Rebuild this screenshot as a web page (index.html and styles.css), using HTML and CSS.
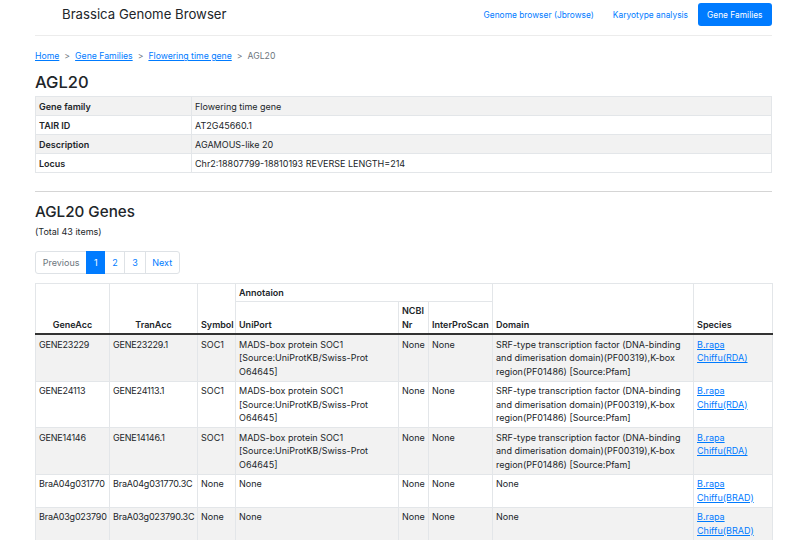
FILE: index.html
```html
<!DOCTYPE html>
<html lang="en">
<head>
<meta charset="utf-8">
<title>Brassica Genome Browser</title>
<link rel="stylesheet" href="styles.css">
</head>
<body>
<div class="wrap">
  <nav class="navbar">
    <a class="brand" href="#">Brassica Genome Browser</a>
    <ul class="nav">
      <li><a class="nav-link" href="#">Genome browser (Jbrowse)</a></li>
      <li><a class="nav-link" href="#">Karyotype analysis</a></li>
      <li><a class="nav-link active" href="#">Gene Families</a></li>
    </ul>
  </nav>

  <ol class="breadcrumb">
    <li><a href="#">Home</a></li>
    <li class="sep">&gt;</li>
    <li><a href="#">Gene Families</a></li>
    <li class="sep">&gt;</li>
    <li><a href="#">Flowering time gene</a></li>
    <li class="sep">&gt;</li>
    <li class="current">AGL20</li>
  </ol>

  <h3 class="title">AGL20</h3>
  <table class="info">
    <tbody>
      <tr><th>Gene family</th><td>Flowering time gene</td></tr>
      <tr><th>TAIR ID</th><td>AT2G45660.1</td></tr>
      <tr><th>Description</th><td>AGAMOUS-like 20</td></tr>
      <tr><th>Locus</th><td>Chr2:18807799-18810193 REVERSE LENGTH=214</td></tr>
    </tbody>
  </table>

  <hr class="divider">

  <h3 class="title genes-title">AGL20 Genes</h3>
  <p class="total">(Total 43 items)</p>

  <ul class="pagination">
    <li class="pg-item disabled">Previous</li>
    <li class="pg-item active">1</li>
    <li class="pg-item">2</li>
    <li class="pg-item">3</li>
    <li class="pg-item">Next</li>
  </ul>

  <table class="genes">
    <colgroup>
      <col class="c-gene"><col class="c-tran"><col class="c-sym"><col class="c-uni">
      <col class="c-ncbi"><col class="c-ipr"><col class="c-dom"><col class="c-sp">
    </colgroup>
    <thead>
      <tr>
        <th rowspan="2" class="center">GeneAcc</th>
        <th rowspan="2" class="center">TranAcc</th>
        <th rowspan="2">Symbol</th>
        <th colspan="3" class="group">Annotaion</th>
        <th rowspan="2">Domain</th>
        <th rowspan="2">Species</th>
      </tr>
      <tr>
        <th>UniPort</th>
        <th>NCBI Nr</th>
        <th>InterProScan</th>
      </tr>
    </thead>
    <tbody>
      <tr>
        <td class="id">GENE23229</td><td class="id">GENE23229.1</td><td>SOC1</td>
        <td>MADS-box protein SOC1 [Source:UniProtKB/Swiss-Prot O64645]</td>
        <td>None</td><td>None</td>
        <td>SRF-type transcription factor (DNA-binding and dimerisation domain)(PF00319),K-box region(PF01486) [Source:Pfam]</td>
        <td><a href="#">B.rapa Chiffu(RDA)</a></td>
      </tr>
      <tr>
        <td class="id">GENE24113</td><td class="id">GENE24113.1</td><td>SOC1</td>
        <td>MADS-box protein SOC1 [Source:UniProtKB/Swiss-Prot O64645]</td>
        <td>None</td><td>None</td>
        <td>SRF-type transcription factor (DNA-binding and dimerisation domain)(PF00319),K-box region(PF01486) [Source:Pfam]</td>
        <td><a href="#">B.rapa Chiffu(RDA)</a></td>
      </tr>
      <tr>
        <td class="id">GENE14146</td><td class="id">GENE14146.1</td><td>SOC1</td>
        <td>MADS-box protein SOC1 [Source:UniProtKB/Swiss-Prot O64645]</td>
        <td>None</td><td>None</td>
        <td>SRF-type transcription factor (DNA-binding and dimerisation domain)(PF00319),K-box region(PF01486) [Source:Pfam]</td>
        <td><a href="#">B.rapa Chiffu(RDA)</a></td>
      </tr>
      <tr>
        <td class="id">BraA04g031770</td><td class="id">BraA04g031770.3C</td><td>None</td>
        <td>None</td><td>None</td><td>None</td><td>None</td>
        <td><a href="#">B.rapa Chiffu(BRAD)</a></td>
      </tr>
      <tr>
        <td class="id">BraA03g023790</td><td class="id">BraA03g023790.3C</td><td>None</td>
        <td>None</td><td>None</td><td>None</td><td>None</td>
        <td><a href="#">B.rapa Chiffu(BRAD)</a></td>
      </tr>
    </tbody>
  </table>
</div>
</body>
</html>
```

FILE: styles.css
```css
* { box-sizing: border-box; }

html, body {
  margin: 0;
  padding: 0;
  background: #fff;
}

body {
  font-family: Inter, "Liberation Sans", Arial, sans-serif;
  font-size: 9px;
  line-height: 1.5;
  color: #212529;
}

a { color: #007bff; text-decoration: underline; }

.wrap {
  width: 737px;
  margin-left: 35px;
}

/* navbar */
.navbar {
  display: flex;
  align-items: center;
  justify-content: space-between;
  height: 36px;
  padding-left: 27px;
  padding-bottom: 6px;
  border-bottom: 1px solid #ececec;
}

.brand {
  font-size: 13.2px;
  line-height: 1.2;
  color: #212529;
  text-decoration: none;
}

.nav {
  display: flex;
  list-style: none;
  margin: 0;
  padding: 0;
}

.nav-link {
  display: block;
  padding: 4.5px 9.5px;
  font-size: 8.4px;
  line-height: 14px;
  text-decoration: none;
  color: #007bff;
}

.nav-link.active {
  background: #007bff;
  color: #fff;
  border-radius: 3px;
  padding: 4.5px 9.5px;
}

/* breadcrumb */
.breadcrumb {
  display: flex;
  list-style: none;
  margin: 14px 0 0;
  padding: 0;
  line-height: 13.5px;
  font-size: 8.7px;
}

.breadcrumb .sep {
  color: #6c757d;
  padding: 0 5px;
}

.breadcrumb .current { color: #6c757d; }

/* headings */
.title {
  margin: 9px 0 4px;
  font-size: 16.5px;
  font-weight: 500;
  line-height: 1.2;
}

.genes-title {
  margin: 11px 0 3px;
  font-size: 15.2px;
}

.total {
  margin: 0 0 13px;
  font-size: 9px;
}

/* tables */
table {
  border-collapse: collapse;
  width: 100%;
}

.info th, .info td {
  border: 1px solid #e3e6e9;
  padding: 2.5px 3px;
  text-align: left;
  vertical-align: top;
  line-height: 13px;
}

.info th {
  width: 156px;
  font-weight: 600;
}

.info tbody tr:nth-child(odd) { background: #f2f2f2; }

.divider {
  margin: 18px 0 0;
  border: 0;
  border-top: 1px solid #d5d5d5;
}

/* pagination */
.pagination {
  display: flex;
  list-style: none;
  margin: 0 0 9px;
  padding: 0;
}

.pg-item {
  padding: 4.5px 6.75px;
  line-height: 11.5px;
  border: 1px solid #dee2e6;
  margin-left: -1px;
  color: #007bff;
}

.pg-item:first-child {
  margin-left: 0;
  border-radius: 3px 0 0 3px;
}

.pg-item:last-child { border-radius: 0 3px 3px 0; }

.pg-item.disabled { color: #6c757d; }

.pg-item.active {
  background: #007bff;
  border-color: #007bff;
  color: #fff;
  position: relative;
  z-index: 1;
}

/* genes table */
.genes {
  table-layout: fixed;
}

.c-gene { width: 74px; }
.c-tran { width: 88px; }
.c-sym { width: 38px; }
.c-uni { width: 163px; }
.c-ncbi { width: 30px; }
.c-ipr { width: 64px; }
.c-dom { width: 201px; }
.c-sp { width: 79px; }

.genes th, .genes td {
  border: 1px solid #e3e6e9;
  padding: 2.5px 3px;
  text-align: left;
  line-height: 13.5px;
  vertical-align: top;
}

.genes th {
  font-weight: 600;
  vertical-align: bottom;
  padding: 2px 3px;
}

.genes th.group { vertical-align: top; }

.genes th.center { text-align: center; }

.genes thead tr:last-child th,
.genes thead th[rowspan] {
  border-bottom: 2px solid #333;
}

.genes tbody tr:nth-child(odd) { background: #f2f2f2; }

.genes td { overflow-wrap: break-word; }

.genes td.id {
  white-space: nowrap;
  letter-spacing: -0.2px;
}
```
